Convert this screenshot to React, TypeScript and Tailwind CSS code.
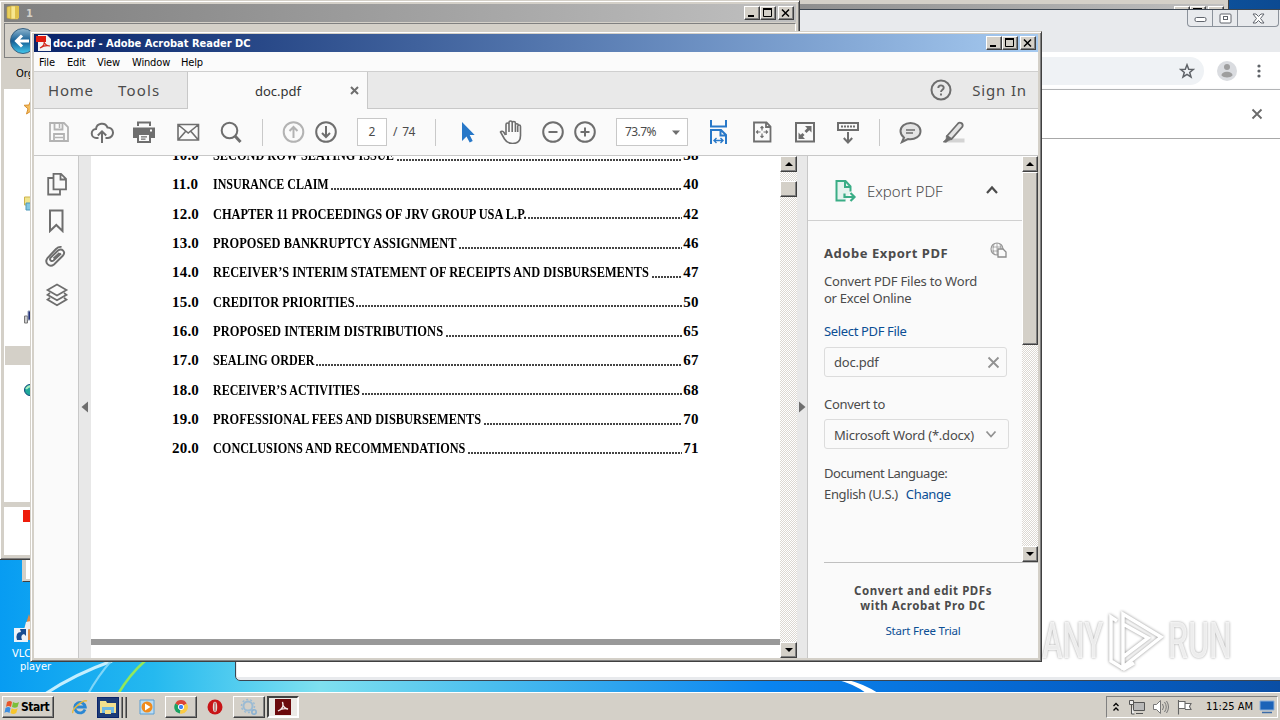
import { ReactNode } from 'react';
import clsx from 'clsx';

const contents = [
  { no: '10.0', title: 'SECOND ROW SEATING ISSUE', page: '38', width: 'w-[183px]', scale: 'scale-x-[0.82]' },
  { no: '11.0', title: 'INSURANCE CLAIM', page: '40', width: 'w-[117px]', scale: 'scale-x-[0.8]' },
  { no: '12.0', title: 'CHAPTER 11 PROCEEDINGS OF JRV GROUP USA L.P.', page: '42', width: 'w-[314px]', scale: 'scale-x-[0.825]' },
  { no: '13.0', title: 'PROPOSED BANKRUPTCY ASSIGNMENT', page: '46', width: 'w-[245px]', scale: 'scale-x-[0.827]' },
  { no: '14.0', title: 'RECEIVER’S INTERIM STATEMENT OF RECEIPTS AND DISBURSEMENTS', page: '47', width: 'w-[438px]', scale: 'scale-x-[0.823]' },
  { no: '15.0', title: 'CREDITOR PRIORITIES', page: '50', width: 'w-[142px]', scale: 'scale-x-[0.82]' },
  { no: '16.0', title: 'PROPOSED INTERIM DISTRIBUTIONS', page: '65', width: 'w-[232px]', scale: 'scale-x-[0.834]' },
  { no: '17.0', title: 'SEALING ORDER', page: '67', width: 'w-[102px]', scale: 'scale-x-[0.81]' },
  { no: '18.0', title: 'RECEIVER’S ACTIVITIES', page: '68', width: 'w-[148px]', scale: 'scale-x-[0.8]' },
  { no: '19.0', title: 'PROFESSIONAL FEES AND DISBURSEMENTS', page: '70', width: 'w-[270px]', scale: 'scale-x-[0.826]' },
  { no: '20.0', title: 'CONCLUSIONS AND RECOMMENDATIONS', page: '71', width: 'w-[254px]', scale: 'scale-x-[0.817]' },
];

const raised =
  'border border-t-white border-l-white border-r-[#404040] border-b-[#404040] shadow-[inset_-1px_-1px_0_#808080] bg-[#d4d0c8]';
const tahoma = "font-['DejaVu_Sans_Condensed','DejaVu_Sans',sans-serif]";
const dither = 'bg-[repeating-conic-gradient(#dcd8d2_0_25%,#fff_0_50%)] bg-[length:2px_2px]';

function Icon({ className, children, w = 24, h = 24 }: { className?: string; children: ReactNode; w?: number; h?: number }) {
  return (
    <svg
      width={w}
      height={h}
      viewBox={`0 0 ${w} ${h}`}
      fill="none"
      stroke="#6e6e6e"
      strokeWidth="1.8"
      className={clsx('shrink-0', className)}
    >
      {children}
    </svg>
  );
}

function CaptionButtons() {
  const button = clsx('flex h-[14px] w-4 items-center justify-center', raised);
  return (
    <div className="flex shrink-0">
      <div className={button}>
        <Icon w={12} h={10}><path d="M2 8h6" stroke="#000" strokeWidth="2" /></Icon>
      </div>
      <div className={button}>
        <Icon w={12} h={10}><path d="M1.500 1v7.500h8V1M1 1.500h9" stroke="#000" strokeWidth="1" /><path d="M1 1h9" stroke="#000" strokeWidth="2" /></Icon>
      </div>
      <div className={clsx(button, 'ml-0.5')}>
        <Icon w={12} h={10}><path d="M2 1.500l7 7M9 1.500l-7 7" stroke="#000" strokeWidth="1.500" /></Icon>
      </div>
    </div>
  );
}

function ScrollButton({ down }: { down?: boolean }) {
  return (
    <div className={clsx('flex h-4 w-full shrink-0 items-center justify-center', raised)}>
      <Icon w={8} h={4}><path d={down ? 'M0 0h8l-4 4z' : 'M0 4h8l-4-4z'} fill="#000" stroke="none" /></Icon>
    </div>
  );
}

function ChromeWindow() {
  return (
    <div className="absolute top-[9px] left-[235px] flex h-[672px] w-[1060px] flex-col rounded-bl-[5px] border border-[#3b4550] bg-[#e8eaed] pb-[3px] pl-px">
      <div className="flex h-[42px] shrink-0 justify-end pr-[15px]">
        <div className="flex h-[17px] w-[92px] rounded-b border border-t-0 border-[#8b929b]">
          <div className="flex w-[25px] items-center justify-center border-r border-[#8b929b]">
            <Icon w={13} h={7}><rect x="1" y="2.500" width="11" height="4" rx="1.500" fill="#fff" stroke="#60656d" strokeWidth="1" /></Icon>
          </div>
          <div className="flex w-[25px] items-center justify-center border-r border-[#8b929b]">
            <Icon w={13} h={11}><rect x="1" y="1" width="11" height="9" rx="1" fill="#fff" stroke="#60656d" strokeWidth="1" /><rect x="4.500" y="3.500" width="4" height="3" stroke="#60656d" strokeWidth="1" /></Icon>
          </div>
          <div className="flex flex-1 items-center justify-center">
            <Icon w={13} h={11}><path d="M1 1h3l2.500 2.500L9 1h3L8.500 5.500 12 10H9L6.500 7.500 4 10H1l3.500-4.500z" fill="#fff" stroke="#60656d" strokeWidth="1" /></Icon>
          </div>
        </div>
      </div>
      <div className="flex h-[38px] shrink-0 items-center justify-end border-b border-[#b4b6b9] bg-white pr-[29px]">
        <div className="flex h-7 w-[900px] items-center justify-end rounded-full bg-[#eff2f5] pr-[9px]">
          <Icon w={16} h={16}><path d="M8 1.800l1.700 4.400 4.700.2-3.700 3 1.300 4.500L8 11.300l-4 2.600 1.300-4.500-3.700-3 4.700-.2z" stroke="#5f6368" strokeWidth="1.500" /></Icon>
        </div>
        <Icon className="ml-[13px]" w={20} h={20}>
          <circle cx="10" cy="10" r="10" fill="#dadce0" stroke="none" />
          <circle cx="10" cy="6" r="3" fill="#9e9e9e" stroke="none" />
          <path d="M4.500 14.500c0-5 11-5 11 0-2 2.500-9 2.500-11 0z" fill="#9e9e9e" stroke="none" />
        </Icon>
        <Icon className="ml-4" w={12} h={16}>
          <circle cx="6" cy="3" r="1.600" fill="#5f6368" stroke="none" />
          <circle cx="6" cy="8" r="1.600" fill="#5f6368" stroke="none" />
          <circle cx="6" cy="13" r="1.600" fill="#5f6368" stroke="none" />
        </Icon>
      </div>
      <div className="flex h-[49px] shrink-0 items-center justify-end border-b border-[#a8a8a8] bg-white pr-[31px] shadow-[0_1px_3px_#aaa]">
        <Icon w={12} h={12}><path d="M1.500 1.500l9 9M10.500 1.500l-9 9" stroke="#6a6a6a" strokeWidth="1.800" /></Icon>
      </div>
      <div className="flex-1 bg-white" />
    </div>
  );
}

function ExplorerWindow() {
  return (
    <div className="absolute top-0 left-0 flex h-[560px] w-[800px] flex-col border-t border-r border-b border-t-[#d4d0c8] border-r-[#404040] border-b-[#404040] bg-[#d4d0c8] pt-[3px] pr-[3px] pb-1 pl-1 shadow-[inset_1px_1px_0_#fff,inset_-1px_-1px_0_#808080]">
      <div className="flex h-[18px] shrink-0 items-center bg-linear-to-r from-[#808080] to-[#c0c0c0] pr-0.5 pl-0.5">
        <Icon w={16} h={16}>
          <path d="M1 2l4-1v13l-4-1z" fill="#e9cf5c" stroke="#c5a236" strokeWidth=".6" />
          <path d="M5 1h7v13H5z" fill="#f7e68e" stroke="#d0b040" strokeWidth=".6" />
          <path d="M9 1h4v12l-4 1z" fill="#dfc04a" stroke="none" />
        </Icon>
        <span className={clsx('ml-1 flex-1 pt-0.5 text-[11px] font-bold text-[#d4d0c8]', tahoma)}>1</span>
        <CaptionButtons />
      </div>
      <div className="mt-px flex h-[35px] shrink-0 items-center border border-[#808080] border-r-white border-b-[#808080] pl-1">
        <Icon w={28} h={28}>
          <defs>
            <linearGradient id="nav" x1="0" y1="0" x2="0" y2="1">
              <stop offset="0" stopColor="#8fb6cf" />
              <stop offset=".5" stopColor="#135d94" />
              <stop offset="1" stopColor="#43c9ee" />
            </linearGradient>
          </defs>
          <circle cx="14" cy="14" r="12.500" fill="url(#nav)" stroke="#376080" strokeWidth="1" />
          <path d="M20 14H8M13 8.500L7.500 14l5.500 5.500" stroke="#fff" strokeWidth="3" />
        </Icon>
      </div>
      <div className={clsx('flex h-[31px] shrink-0 items-center pt-0.5 pl-3 text-[11px] text-black', tahoma)}>Organize</div>
      <div className="flex flex-1 flex-col bg-white">
        <Icon className="mt-[10px] ml-[19px]" w={16} h={16}><path d="M8 1l2 5 5 .3-4 3.500L12.500 15 8 12l-4.500 3L5 9.800 1 6.300 6 6z" fill="#f4bd5e" stroke="#d89030" strokeWidth="1" /></Icon>
        <Icon className="mt-[80px] ml-[19px]" w={16} h={16}><path d="M1.500 2h12v8h-12z" fill="#efe58e" stroke="#cfb34c" strokeWidth="1" /><path d="M3 8h10v7H3z" fill="#83c7e2" stroke="#4c97b9" strokeWidth="1" /></Icon>
        <Icon className="mt-[98px] ml-[19px]" w={16} h={16}><path d="M1.500 7h3v7h-3z" fill="#ccc" stroke="#777" strokeWidth="1" /><path d="M5 2h8v9H5z" fill="#223078" stroke="#9aa5be" strokeWidth="1" /></Icon>
        <div className="mt-[21px] ml-px h-[19px] bg-[#d4d0c8]" />
        <Icon className="mt-[17px] ml-[19px]" w={16} h={16}><circle cx="7" cy="8" r="5.500" fill="#20a89a" stroke="#124a7c" strokeWidth="1" /><path d="M3 7c2-3 4-3 6-3" stroke="#a8eec0" strokeWidth="2" /></Icon>
        <div className="mt-[104px] h-[5px] bg-[#d4d0c8]" />
        <div className="mt-[3px] ml-[19px] h-3 w-8 bg-[#ee1c0b]" />
      </div>
    </div>
  );
}

function MainToolbar() {
  return (
    <div className="flex h-[47px] shrink-0 items-center border-b border-[#c8c8c8] bg-[#fafafa] pl-[13px] text-[#4b4b4b]">
      <Icon>
        <path d="M3 3h14l4 4v14H3z" stroke="#b3b3b3" />
        <path d="M7.500 3v6.500h8V3M7 21v-7h10v7" stroke="#b3b3b3" />
        <path d="M12.500 4v4M8 17.500h8" stroke="#b3b3b3" strokeWidth="1.500" />
      </Icon>
      <Icon className="ml-[19px]">
        <path d="M8.500 18H6.500a4.500 4.500 0 0 1-.5-9 6 6 0 0 1 11.500-1.500 5 5 0 0 1 .5 10.500h-2.500" strokeWidth="2" />
        <path d="M12 23V11.500M7.800 15.500l4.200-4.200 4.200 4.200" strokeWidth="2" />
      </Icon>
      <Icon className="ml-[18px]">
        <path d="M5 1.500h14v4.500H5zM1 7.500h22v10.500h-4V14H5v4H1z" fill="#6e6e6e" stroke="none" />
        <path d="M7 3.500h10v2.500H7z" fill="#fafafa" stroke="none" />
        <path d="M6 14h12v8H6z" fill="#fafafa" strokeWidth="2" />
        <path d="M9 16.800h6M9 19.200h4.500" strokeWidth="1.300" />
        <path d="M18 10.500h2" stroke="#fff" />
      </Icon>
      <Icon className="ml-5">
        <path d="M2 4.500h20.500v15.500H2zM2.500 5l9.700 8L22 5M2.500 19.500l7-8M22 19.500l-7-8" strokeWidth="1.600" />
      </Icon>
      <Icon className="ml-[19px]">
        <circle cx="10.500" cy="10.500" r="7.800" strokeWidth="2" />
        <path d="M16 16l5.500 6" strokeWidth="3" />
      </Icon>
      <div className="ml-[19px] h-[27px] w-px bg-[#c9c9c9]" />
      <Icon className="ml-[18px]">
        <circle cx="12.500" cy="12" r="9.800" stroke="#b3b3b3" strokeWidth="2" />
        <path d="M12.500 18V7M8.500 11l4-4 4 4" stroke="#b3b3b3" strokeWidth="2" />
      </Icon>
      <Icon className="ml-[9px]">
        <circle cx="12" cy="12" r="9.800" strokeWidth="2" />
        <path d="M12 6v11M8 13l4 4 4-4" strokeWidth="2" />
      </Icon>
      <div className="ml-[19px] flex h-7 w-[30px] items-center justify-center border border-[#c8c8c8] bg-white text-xs">2</div>
      <div className="ml-[6px] w-6 text-xs tracking-[-0.500px] whitespace-pre">/  74</div>
      <div className="ml-[18px] h-[27px] w-px bg-[#c9c9c9]" />
      <Icon className="ml-5">
        <path d="M6 2v19l4.500-4.500 3.200 6 3-1.500-3-6h5z" fill="#2878c8" stroke="none" />
      </Icon>
      <Icon className="ml-[19px]">
        <path d="M6.500 15L5 12.500c-1-1.500-2.700-1.700-3.500-.5l4 7c2 3.500 4.500 4.500 8 4.500 5 0 8-3 8-8V6.500c0-2-2.800-2-2.800 0V12" strokeWidth="1.600" />
        <path d="M7 15V4.500c0-2 3-2 3 0V12M10 12V2.500c0-2 3.200-2 3.200 0V12M13.200 12V3c0-2 3.200-2 3.200 0v9M16.400 5c0-2 2.800-1.500 2.800 0" strokeWidth="1.600" />
      </Icon>
      <Icon className="ml-[18px]"><circle cx="12" cy="12" r="9.800" strokeWidth="2" /><path d="M7.500 12h9" strokeWidth="2" /></Icon>
      <Icon className="ml-2"><circle cx="12" cy="12" r="9.800" strokeWidth="2" /><path d="M7.500 12h9M12 7.500v9" strokeWidth="2" /></Icon>
      <div className="ml-[19px] flex h-7 w-[72px] items-center justify-between border border-[#c8c8c8] bg-white pr-[7px] pl-2 text-xs tracking-[-0.600px]">
        73.7%
        <Icon w={8} h={5}><path d="M0 .5h8L4 5z" fill="#6e6e6e" stroke="none" /></Icon>
      </div>
      <Icon className="ml-[18px] -mt-px" h={26}>
        <path d="M5 1v6.500h15V1M5 25V11h10l5 5v9M14.500 11v5.500H20" stroke="#2878c8" strokeWidth="2" />
        <path d="M8 21.500h9M10.500 19L8 21.500l2.500 2.500M14.500 19l2.500 2.500-2.500 2.500" stroke="#2878c8" strokeWidth="1.400" />
      </Icon>
      <Icon className="ml-5">
        <path d="M4 2.500h12.500l4 4V21.500H4zM16 3v4h4" />
        <path d="M12 6v11M6.500 12h11M10.500 8L12 6.500 13.500 8M10.500 16l1.500 1.500 1.500-1.500M8 10.500L6.500 12 8 13.500M16 10.500l1.500 1.500-1.500 1.500" strokeWidth="1.200" />
        <path d="M10.500 10.500h3v3h-3z" fill="#fafafa" stroke="none" />
      </Icon>
      <Icon className="ml-[19px]">
        <path d="M3 3h18v18.500H3z" strokeWidth="2" />
        <path d="M12 6h6.500v6.500l-2.200-2.200-2.800 2.700-2-2 2.700-2.800zM5.500 12.500V19H12l-2.200-2.200 1.700-1.800-2-2-1.800 1.700z" fill="#6e6e6e" stroke="none" />
      </Icon>
      <Icon className="ml-[19px]">
        <path d="M2 3h20v7H2z" strokeWidth="2" />
        <path d="M5 6.500h14" strokeDasharray="2 1" />
        <path d="M12 12v11M7.800 18l4.200 4.500 4.200-4.500" strokeWidth="2" />
      </Icon>
      <div className="ml-[19px] h-[27px] w-px bg-[#c9c9c9]" />
      <Icon className="ml-[18px]">
        <path d="M12.500 3C7 3 2.500 6.500 2.500 11c0 3 1.500 5 3.500 6.500L4 22l6-3c7 1 12.500-2.500 12.500-8 0-4.500-4.500-8-10-8z" fill="#e4e4e4" strokeWidth="2" />
        <path d="M8 10h9M8 13h7" strokeWidth="1.400" />
      </Icon>
      <Icon className="ml-[19px]">
        <path d="M10 18.500h13.500v4H6z" fill="#d4d4d4" stroke="none" />
        <path d="M6 16L17 3.500c2-2 5.500 0 4.500 3L10.500 19z" fill="#e4e4e4" />
        <path d="M5.500 15.500l5 4L8 20.500l-3 2-3-.5 3-3z" fill="#6e6e6e" strokeWidth=".5" />
      </Icon>
    </div>
  );
}

function NavRail() {
  return (
    <div className="flex w-[45px] shrink-0 flex-col items-center border-r border-[#c8c8c8] bg-[#fafafa] pt-4">
      <Icon className="ml-0.5"><path d="M8.500 1.800h7.500l5 5v10.500H8.500zM15.500 2v5.500H21M8 6H3.200v16.500H15V18" /></Icon>
      <Icon className="mt-[13px] -ml-px"><path d="M6 1.500h12.500V22l-6.200-6L6 22z" strokeWidth="2" /></Icon>
      <Icon className="mt-3 -ml-px"><path d="M17 8.500l-7.500 7c-2 1.500-4.500-.7-3-2.700L14 5.500c4-3 8 1.500 5 5l-9 9c-4.500 3.500-10-1.500-6.500-6.500l8.500-9c1.500-1.500 3.500-2.500 5.500-2M9.500 13.500l6-5.500" strokeWidth="1.900" /></Icon>
      <Icon className="mt-[14px] ml-px"><path d="M12 1.500l9.500 5.500L12 12.500 2.500 7zM5 10l-2.500 1.800L12 17.300l9.500-5.500L19 10M5 14.800l-2.500 1.800L12 22.200l9.500-5.600-2.500-1.800" strokeWidth="1.700" /></Icon>
    </div>
  );
}

function DocumentPage() {
  return (
    <div className="flex w-[689px] shrink-0 flex-col bg-white">
      <div className="flex h-[483px] flex-col overflow-hidden pl-[81px] font-['Liberation_Serif',serif] text-[15px] font-bold text-black">
        <div className="-mt-[15.100px] flex flex-col">
          {contents.map(row => (
            <div key={row.no} className="flex h-[29.330px] w-[527px] shrink-0 items-center leading-none">
              <span className="w-[41px] shrink-0 tracking-[0.200px]">{row.no}</span>
              <span className={clsx('shrink-0 whitespace-nowrap', row.width)}>
                <span className={clsx('inline-block origin-left', row.scale)}>{row.title}</span>
              </span>
              <span className="mt-2 ml-px h-0.5 flex-1 bg-[repeating-linear-gradient(90deg,#444_0_2px,#fff_2px_3px)]" />
              <span className="ml-px shrink-0 tracking-[0.400px]">{row.page}</span>
            </div>
          ))}
        </div>
      </div>
      <div className="h-[6px] shrink-0 bg-[#999]" />
    </div>
  );
}

function ExportPanel() {
  return (
    <div className="flex w-[231px] shrink-0 flex-col border-l border-[#c8c8c8] bg-[#fafafa] text-[#4b4b4b]">
      <div className="flex h-[406px] shrink-0">
        <div className="flex flex-1 flex-col">
          <div className="flex h-[65px] shrink-0 items-center border-b border-[#d0d0d0] pt-1.5 pl-[26px]">
            <Icon>
              <path d="M11.500 21.500H2.500V2h9l5 5.500v5" fill="#e5f3ee" stroke="#3aad86" strokeWidth="2" />
              <path d="M11 2v6h6" stroke="#3aad86" strokeWidth="2" />
              <path d="M10.500 14.500v3.500h9M16.500 14l4 4-4 4" stroke="#3aad86" strokeWidth="2.200" />
            </Icon>
            <span className="ml-[9px] w-[118px] text-[15px] font-light">Export PDF</span>
            <Icon w={14} h={10} className="-mt-0.5"><path d="M2 8l5-5.500L12 8" stroke="#4b4b4b" strokeWidth="2.200" /></Icon>
          </div>
          <div className="flex flex-col pl-4 text-[13px] tracking-[-0.200px]">
            <div className="mt-[20px] flex h-6 items-center">
              <span className="w-[165px] pt-0.5 text-[13px] font-bold tracking-[0.550px]">Adobe Export PDF</span>
              <Icon w={20} h={20} className="-mt-1">
                <circle cx="8" cy="8" r="6" stroke="#999" strokeWidth="1.200" />
                <path d="M2 6h12M2 10h12M8 2v12M5 3q-2 5 0 10M11 3q2 5 0 10" stroke="#999" strokeWidth=".8" />
                <path d="M9 8h5l3 3v5H9z" fill="#fafafa" stroke="#8c8c8c" strokeWidth="1.300" />
              </Icon>
            </div>
            <div className="mt-2 leading-[17px] whitespace-nowrap">
              <p>Convert PDF Files to Word</p>
              <p className="tracking-[-0.250px]">or Excel Online</p>
            </div>
            <a className="mt-4 leading-[17px] tracking-[-0.350px] text-[#0b4e94]">Select PDF File</a>
            <div className="mt-[7px] flex h-[30px] w-[183px] items-center justify-between rounded-[3px] border border-[#dcdcdc] px-[9px] pr-[6px]">
              <span className="pt-0.5">doc.pdf</span>
              <Icon w={13} h={13}><path d="M1.500 1.500l10 10M11.500 1.500l-10 10" stroke="#929292" strokeWidth="1.800" /></Icon>
            </div>
            <span className="mt-[19px] leading-[17px] tracking-[-0.300px]">Convert to</span>
            <div className="mt-[6px] flex h-[30px] w-[185px] items-center justify-between rounded-[3px] border border-[#dcdcdc] pr-[11px] pl-[9px]">
              <span className="pt-[3px]">Microsoft Word (*.docx)</span>
              <Icon w={12} h={8}><path d="M1.500 1.500L6 6.500l4.500-5" stroke="#929292" strokeWidth="1.800" /></Icon>
            </div>
            <span className="mt-4 leading-[17px] tracking-[-0.450px]">Document Language:</span>
            <div className="mt-1 flex gap-2 leading-[17px] tracking-[-0.350px]">
              <span>English (U.S.)</span>
              <a className="text-[#0b4e94]">Change</a>
            </div>
          </div>
        </div>
        <div className={clsx('flex w-4 shrink-0 flex-col', dither)}>
          <ScrollButton />
          <div className={clsx('h-[173px] shrink-0', raised)} />
          <div className="flex-1" />
          <ScrollButton down />
        </div>
      </div>
      <div className="ml-4 flex flex-1 flex-col items-center border-t border-[#c0c0c0] pt-5 pr-4 text-center">
        <p className="text-[11.500px] leading-[15px] font-bold tracking-[0.550px]">Convert and edit PDFs<br />with Acrobat Pro DC</p>
        <a className="mt-[10px] text-[11.500px] leading-[16px] tracking-[-0.200px] text-[#0b4e94]">Start Free Trial</a>
      </div>
    </div>
  );
}

function AcrobatWindow() {
  return (
    <div className="absolute top-[31px] left-[30px] flex h-[631px] w-[1012px] flex-col border border-t-[#d4d0c8] border-l-[#d4d0c8] border-r-[#404040] border-b-[#404040] bg-[#d4d0c8] pt-0.5 pr-[3px] pb-[3px] pl-[3px] shadow-[inset_1px_1px_0_#fff,inset_-1px_-1px_0_#808080]">
      <div className="flex h-[18px] shrink-0 items-center bg-linear-to-r from-[#0a246a] to-[#a6caf0] pr-0.5 pl-0.5">
        <Icon w={16} h={16}>
          <path d="M2 0h9l4 4v12H2z" fill="#f2f2f2" stroke="none" />
          <path d="M0 1h10v6H0z" fill="#e01a0e" stroke="none" />
          <path d="M4 13c4-2 5-5 4-8 0 4 3 6 6 6-4-1-7 0-10 2z" stroke="#d02318" strokeWidth="1.200" />
        </Icon>
        <span className={clsx('ml-px flex-1 pt-0.5 text-[11px] font-bold whitespace-nowrap text-white', tahoma)}>doc.pdf - Adobe Acrobat Reader DC</span>
        <CaptionButtons />
      </div>
      <div className={clsx('flex h-5 shrink-0 items-center border-b border-[#cfcfcf] bg-[#fbfbfb] pt-[3px] pl-[5px] text-[11px] tracking-[-0.150px] text-black', tahoma)}>
        <span className="w-7">File</span>
        <span className="w-[30px]">Edit</span>
        <span className="w-[35px]">View</span>
        <span className="w-[49px]">Window</span>
        <span>Help</span>
      </div>
      <div className="flex h-[37px] shrink-0 bg-[#e9e9e9] text-[15px] text-[#4b4b4b]">
        <div className="flex w-[154px] items-center border-r border-b border-[#c8c8c8] pl-[14px] tracking-[0.800px]">
          <span className="w-[70px]">Home</span>
          <span className="tracking-[1.200px]">Tools</span>
        </div>
        <div className="flex w-[180px] items-center justify-end border-r border-[#c8c8c8] bg-[#fafafa] pr-2 text-[13px] text-[#333]">
          <span className="w-[95px] pt-0.5">doc.pdf</span>
          <Icon w={9} h={9}><path d="M1 1l7 7M8 1L1 8" strokeWidth="2" /></Icon>
        </div>
        <div className="flex flex-1 items-center justify-end border-b border-[#c8c8c8] pr-[11px]">
          <Icon className="mr-5" w={22} h={22}>
            <circle cx="11" cy="11" r="9.500" strokeWidth="2" />
            <path d="M8.300 9c0-3.500 5.400-3.300 5.400-.3 0 2-2.700 2-2.700 4.300M11 14.500v2" strokeWidth="1.900" />
          </Icon>
          <span className="tracking-[0.850px]">Sign In</span>
        </div>
      </div>
      <MainToolbar />
      <div className="flex min-h-0 flex-1 bg-[#e8e8e8]">
        <NavRail />
        <div className="flex w-3 shrink-0 items-center justify-center pr-px">
          <Icon w={7} h={12}><path d="M7 .5v11L.5 6z" fill="#6e6e6e" stroke="none" /></Icon>
        </div>
        <DocumentPage />
        <div className={clsx('flex w-[17px] shrink-0 flex-col', dither)}>
          <ScrollButton />
          <div className="h-[9px] shrink-0" />
          <div className={clsx('h-4 shrink-0', raised)} />
          <div className="flex-1" />
          <ScrollButton down />
        </div>
        <div className="flex w-[10px] shrink-0 items-center justify-center">
          <Icon w={7} h={12}><path d="M0 .5v11L6.500 6z" fill="#6e6e6e" stroke="none" /></Icon>
        </div>
        <ExportPanel />
      </div>
    </div>
  );
}

function Taskbar() {
  return (
    <div className={clsx('absolute top-[692px] left-0 flex h-7 w-[1280px] items-center border-t border-white bg-[#d4d0c8] pt-px pl-0.5 text-[11px] text-black', tahoma)}>
      <div className={clsx('flex h-[22px] w-[52px] items-center gap-px pl-px', raised)}>
        <Icon w={16} h={16}>
          <path d="M3 3q3-2 5 0L7 8Q4 6 2 8z" fill="#e8562a" stroke="none" />
          <path d="M9 3q3 2 6 0l-1.500 5Q11 9.500 8 8z" fill="#7bbf3a" stroke="none" />
          <path d="M1.500 9q3-2 5 0l-1 5q-3-2-5 0z" fill="#3d8ee0" stroke="none" />
          <path d="M7.700 9.300q3 2 6 0L12.200 14q-3 2-5.700 0z" fill="#f7c52c" stroke="none" />
        </Icon>
        <span className="text-xs font-bold tracking-[-0.500px]">Start</span>
      </div>
      <Icon className="ml-[18px]" w={16} h={16}>
        <path d="M13 10.500A5.300 5.300 0 1 1 13.300 8H4" stroke="#2b87d3" strokeWidth="2.800" />
        <path d="M1 14C-1 11 11 0 15 2" stroke="#e8b93c" strokeWidth="1.400" />
      </Icon>
      <div className="ml-[9px] flex h-[21px] w-[22px] items-center justify-center border border-[#0a246a] bg-[#1d3c78]">
        <Icon w={18} h={16}><path d="M1 2h6l1 2h9v10H1z" fill="#f3df8d" stroke="none" /><path d="M3 8h12v6H3z" fill="#6fb8e4" stroke="none" /><path d="M6 11h6v4H6z" fill="#f3df8d" stroke="none" /></Icon>
      </div>
      <div className="h-[21px] w-1 border-r border-[#404040] shadow-[inset_-1px_0_0_#808080]" />
      <div className="h-[21px] w-1 border-r border-[#404040] shadow-[inset_-1px_0_0_#808080]" />
      <Icon className="ml-3" w={16} h={16}>
        <path d="M1 1h14v14H1z" fill="#b9dcf4" stroke="#5a9fd4" strokeWidth="1" />
        <circle cx="8" cy="8" r="5.500" fill="#f08b1d" stroke="none" />
        <path d="M6 4.500v7L11.500 8z" fill="#fff" stroke="none" />
      </Icon>
      <div className={clsx('ml-[10px] flex h-[22px] w-8 items-center justify-center', raised)}>
        <Icon w={14} h={14}>
          <path d="M7 7L1.300 3.500A6.500 6.500 0 0 1 12.700 3.500z" fill="#dc4437" stroke="none" />
          <path d="M7 7l-1 6.500A6.500 6.500 0 0 1 1.300 3.500z" fill="#1ba261" stroke="none" />
          <path d="M7 7l5.700-3.500A6.500 6.500 0 0 1 6 13.500z" fill="#fbcb43" stroke="none" />
          <circle cx="7" cy="7" r="2.700" fill="#4385f5" stroke="#fff" strokeWidth="1" />
        </Icon>
      </div>
      <Icon className="ml-[10px]" w={16} h={16}>
        <circle cx="8" cy="8" r="7.500" fill="#c81417" stroke="none" />
        <ellipse cx="8" cy="8" rx="2.200" ry="5.200" fill="#e4dcd8" stroke="none" />
        <path d="M8 3.500v9" stroke="#8e0f10" strokeWidth=".8" />
      </Icon>
      <div className={clsx('ml-[10px] flex h-[22px] w-8 items-center justify-center', raised)}>
        <Icon w={18} h={18}>
          <circle cx="8" cy="8" r="4.500" stroke="#9bbbd4" strokeWidth="2" />
          <circle cx="8" cy="8" r="6.500" stroke="#9bbbd4" strokeWidth="1.500" strokeDasharray="2 2" />
          <circle cx="14" cy="14" r="2.200" stroke="#8cb2d2" strokeWidth="1.500" />
        </Icon>
      </div>
      <div className="ml-0.5 flex h-[22px] w-8 items-center justify-center border-2 border-t-[#404040] border-r-white border-b-white border-l-[#404040] bg-[#eceae6]">
        <div className="flex size-4 items-center justify-center bg-[#6b0a0c]">
          <Icon w={12} h={12}><path d="M1 10c5-2 6-6 4.500-9C5.500 5 8 8 11 8 7 7 4 8 1 10z" stroke="#f4e8e8" strokeWidth="1.300" /></Icon>
        </div>
      </div>
      <div className="flex-1" />
      <div className="mr-0.5 flex h-[22px] w-[172px] items-center border border-t-[#808080] border-r-white border-b-white border-l-[#808080] pl-1.5">
        <Icon w={6} h={10}><path d="M.5 4L3 1.500 5.500 4M.5 8.500L3 6l2.500 2.500" stroke="#000" strokeWidth="1.300" /></Icon>
        <Icon className="ml-[9px]" w={18} h={16}><path d="M5.500 3.500h11v8h-11zM8 14.500h7" fill="#b8b8b8" stroke="#555" strokeWidth="1" /><path d="M1.500 1.500h4v4h-4zM3.500 6v9h3" fill="#eee" stroke="#555" strokeWidth="1" /></Icon>
        <Icon className="ml-1.5" w={18} h={16}><path d="M1.500 5.500h3l4-4v13l-4-4h-3z" fill="#fff" stroke="#777" strokeWidth="1" /><path d="M10.500 5q2 3 0 6M12.500 3q3.500 5 0 10M14.500 2q4 6 0 12" stroke="#777" strokeWidth="1" /></Icon>
        <Icon className="ml-1.5" w={18} h={16}><path d="M2.500 1v14.500M3 2.500h6v7H3M9 4.500h6l-1.500 3 1.500 3H9" fill="#fff" stroke="#666" strokeWidth="1.100" /></Icon>
        <span className="ml-3 w-[49px] pt-px whitespace-nowrap">11:25 AM</span>
        <Icon className="ml-1" w={16} h={14}><path d="M1 1h14v9H1z" fill="#1c63b8" stroke="#8aaed8" strokeWidth="1" /><path d="M3 12.500h10" stroke="#3c6ca8" strokeWidth="1.500" /></Icon>
      </div>
    </div>
  );
}

function Watermark() {
  return (
    <div className="absolute top-[609px] left-[1042px] flex h-[64px] w-[194px] items-center font-[Roboto,sans-serif] text-[50px] leading-none font-medium text-white/80 [text-shadow:0_0_3px_rgba(0,0,0,0.400)]">
      <div className="w-[64px]"><span className="inline-block origin-left scale-x-[0.620]">ANY</span></div>
      <Icon w={60} h={64}>
        <g strokeWidth="3.500" stroke="#fff" className="drop-shadow-[0_0_1.500px_rgba(0,0,0,0.450)]">
          <path d="M17 5l38 23-38 30zM17 15l25 14-25 19zM11 12L5 8v44l13 8 10-6" />
        </g>
      </Icon>
      <div className="ml-0.5"><span className="inline-block origin-left scale-x-[0.640]">RUN</span></div>
    </div>
  );
}

function App() {
  return (
    <div className="relative h-[720px] w-[1280px] overflow-hidden bg-linear-to-r from-[#079cf2] from-0% via-[#0a86e6] via-60% to-[#0c4a92] font-['Noto_Sans',sans-serif]">
      <svg className="absolute top-[560px] left-0" width="1280" height="140">
        <defs>
          <linearGradient id="sky" x1="0" x2="1" y1="0" y2="0">
            <stop offset="0" stopColor="#079cf2" />
            <stop offset=".12" stopColor="#25b9ef" />
            <stop offset=".25" stopColor="#7fe0f0" />
            <stop offset=".38" stopColor="#4cbfee" />
            <stop offset=".6" stopColor="#0a84f0" />
            <stop offset=".85" stopColor="#0560c8" />
            <stop offset="1" stopColor="#0a4ea4" />
          </linearGradient>
        </defs>
        <rect width="1280" height="140" fill="url(#sky)" />
        <path d="M45 134Q75 114 112 101" stroke="#c4efff" strokeWidth="3" fill="none" />
        <path d="M88 134Q98 116 111 101" stroke="#7fd6f8" strokeWidth="2" fill="none" />
        <path d="M118 134Q130 114 145 101" stroke="#92e85c" strokeWidth="2.500" fill="none" />
        <path d="M838 120q16 4 28 13h12q-14-9-30-13z" fill="#fff" />
      </svg>
      <div className="absolute top-0 left-[780px] flex h-[12px] w-[449px] flex-col border-r border-[#404040] bg-[#d4d0c8] pt-1 pr-1">
        <div className="flex h-[14px] shrink-0 items-start justify-end bg-linear-to-r from-[#8c8c8c] to-[#c0c0c0] pt-0.5"><CaptionButtons /></div>
      </div>
      <ChromeWindow />
      <div className="absolute top-[640px] left-[12px] flex h-[34px] w-[50px] flex-col text-[11px] leading-[13px] text-white font-['DejaVu_Sans_Condensed','DejaVu_Sans',sans-serif]">
        <span className="mt-[7px] whitespace-nowrap">VLC media</span>
        <span className="pl-2">player</span>
      </div>
      <svg className="absolute top-[612px] left-[13px]" width="30" height="32">
        <path d="M16 2l8 26H8z" fill="#d98a48" />
        <path d="M13 10l10-2v8l-12 2z" fill="#eee" />
        <path d="M1 16h14v14H1z" fill="#eef2f8" />
        <path d="M4 28q-2-8 4-8l-1-3h6v7l-2-2q-4 1-2 6z" fill="#174c92" />
      </svg>
      <div className="absolute top-[556px] left-[22px] h-[26px] w-20 border border-l-[#d4d0c8] border-b-[#404040] bg-white shadow-[inset_3px_-2px_0_#d4d0c8]" />
      <ExplorerWindow />
      <AcrobatWindow />
      <Watermark />
      <Taskbar />
    </div>
  );
}

export default App;
